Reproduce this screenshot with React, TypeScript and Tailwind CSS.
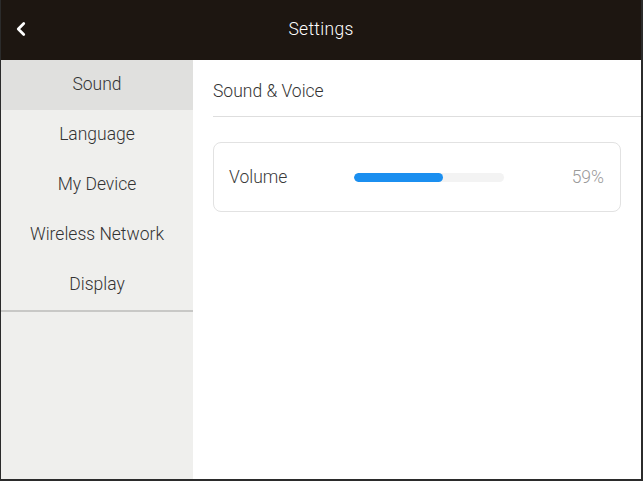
import { ChevronLeft } from "lucide-react";

const menu = ["Sound", "Language", "My Device", "Wireless Network", "Display"];

export default function App() {
  const volume = 59;

  return (
    <div
      className="w-[643px] h-[481px] bg-[#2b2b2b] pl-px pr-[2px] pb-[2px] flex flex-col"
      style={{ fontFamily: "Roboto, 'Noto Sans', sans-serif" }}
    >
      {/* top bar */}
      <div className="h-[60px] bg-[#1d1611] flex items-center relative shrink-0">
        <button className="absolute left-[9px] top-[18px] text-white">
          <ChevronLeft className="w-[22px] h-[22px]" strokeWidth={3} />
        </button>
        <h1 className="flex-1 text-center text-white text-[17.5px] font-light tracking-[0.3px] -mt-[1px]">Settings</h1>
      </div>

      <div className="flex flex-1 min-h-0">
        {/* side menu */}
        <div className="w-[192px] bg-[#efefed] flex flex-col">
          <div className="border-b-2 border-[#c8c8c6]">
            {menu.map((item, i) => (
              <div
                key={item}
                className={`h-[50px] flex items-center justify-center text-[17.5px] font-light text-[#333] pb-px ${
                  i === 0 ? "bg-[#e0e0de]" : ""
                }`}
              >
                {item}
              </div>
            ))}
          </div>
        </div>

        {/* content */}
        <div className="flex-1 bg-white pl-[20px]">
          <div className="h-[57px] border-b border-[#dedede] flex items-center pt-[7px] text-[17.5px] font-light text-[#333]">
            Sound &amp; Voice
          </div>
          <div className="mt-[25px] mr-[20px] h-[70px] rounded-[8px] border border-[#e2e2e2] flex items-center pl-[15px] pr-[16px] pt-[1px]">
            <span className="w-[125px] text-[17.5px] font-light text-[#3a3a3a]">Volume</span>
            <div className="w-[150px] h-[9px] rounded-full bg-[#f3f3f3] overflow-hidden">
              <div className="h-full rounded-full bg-[#1b8ff0]" style={{ width: `${volume}%` }} />
            </div>
            <span className="ml-auto text-[17.5px] font-light text-[#9a9a9a]">{volume}%</span>
          </div>
        </div>
      </div>
    </div>
  );
}
